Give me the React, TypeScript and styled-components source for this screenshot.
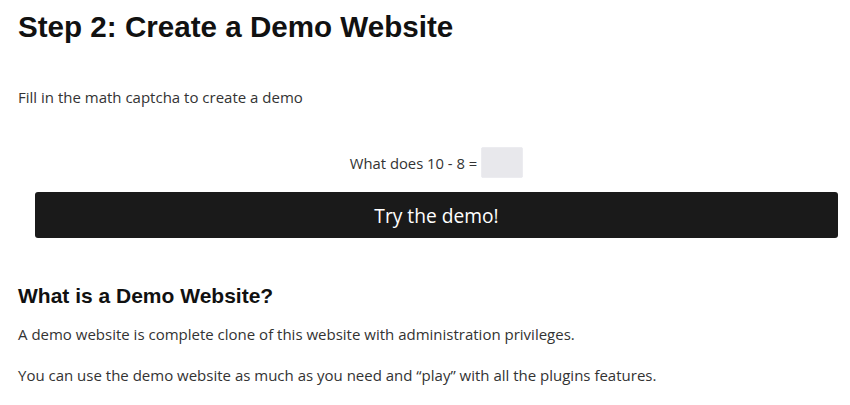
import React from "react";
import styled, { createGlobalStyle } from "styled-components";

const Global = createGlobalStyle`
  html, body { margin: 0; padding: 0; background: #fff; }
  body { font-family: "Open Sans", sans-serif; color: #333; }
`;

const Page = styled.div`
  padding: 9px 12px 0 18px;
`;

const Title = styled.h1`
  font-family: "Liberation Sans", Arial, sans-serif;
  font-weight: 700;
  font-size: 29.6px;
  line-height: 36px;
  color: #111;
  margin: 0 0 41px 0;
`;

const Text = styled.p`
  font-family: "Open Sans", sans-serif;
  font-size: 15px;
  line-height: 22px;
  color: #333;
  margin: 0;
`;

const Form = styled.form`
  margin: 39px 0 0 17px;
  display: flex;
  flex-direction: column;
  align-items: center;
  gap: 14px;
`;

const CaptchaRow = styled.label`
  display: flex;
  align-items: center;
  gap: 4px;
  font-family: "Open Sans", sans-serif;
  font-size: 14.8px;
  color: #333;
`;

const CaptchaInput = styled.input`
  width: 42px;
  height: 31px;
  box-sizing: border-box;
  border: 1px solid #ececf0;
  background: #e8e8ec;
  border-radius: 2px;
  padding: 0;
  outline: none;
`;

const Button = styled.button`
  width: 100%;
  height: 46px;
  border: none;
  border-radius: 3px;
  background: #1a1a1a;
  color: #fff;
  font-family: "Open Sans", sans-serif;
  font-size: 19.2px;
  cursor: pointer;
`;

const SubTitle = styled.h2`
  font-family: "Liberation Sans", Arial, sans-serif;
  font-weight: 700;
  font-size: 21px;
  line-height: 24px;
  color: #111;
  margin: 46px 0 15px 0;
`;

const Spaced = styled(Text)`
  margin-bottom: 19px;
`;

export default function App() {
  return (
    <>
      <Global />
      <Page>
        <Title>Step 2: Create a Demo Website</Title>
        <Text>Fill in the math captcha to create a demo</Text>
        <Form onSubmit={(e) => e.preventDefault()}>
          <CaptchaRow>
            What does 10 - 8 = <CaptchaInput type="text" />
          </CaptchaRow>
          <Button type="submit">Try the demo!</Button>
        </Form>
        <SubTitle>What is a Demo Website?</SubTitle>
        <Spaced>A demo website is complete clone of this website with administration privileges.</Spaced>
        <Text>You can use the demo website as much as you need and “play” with all the plugins features.</Text>
      </Page>
    </>
  );
}
